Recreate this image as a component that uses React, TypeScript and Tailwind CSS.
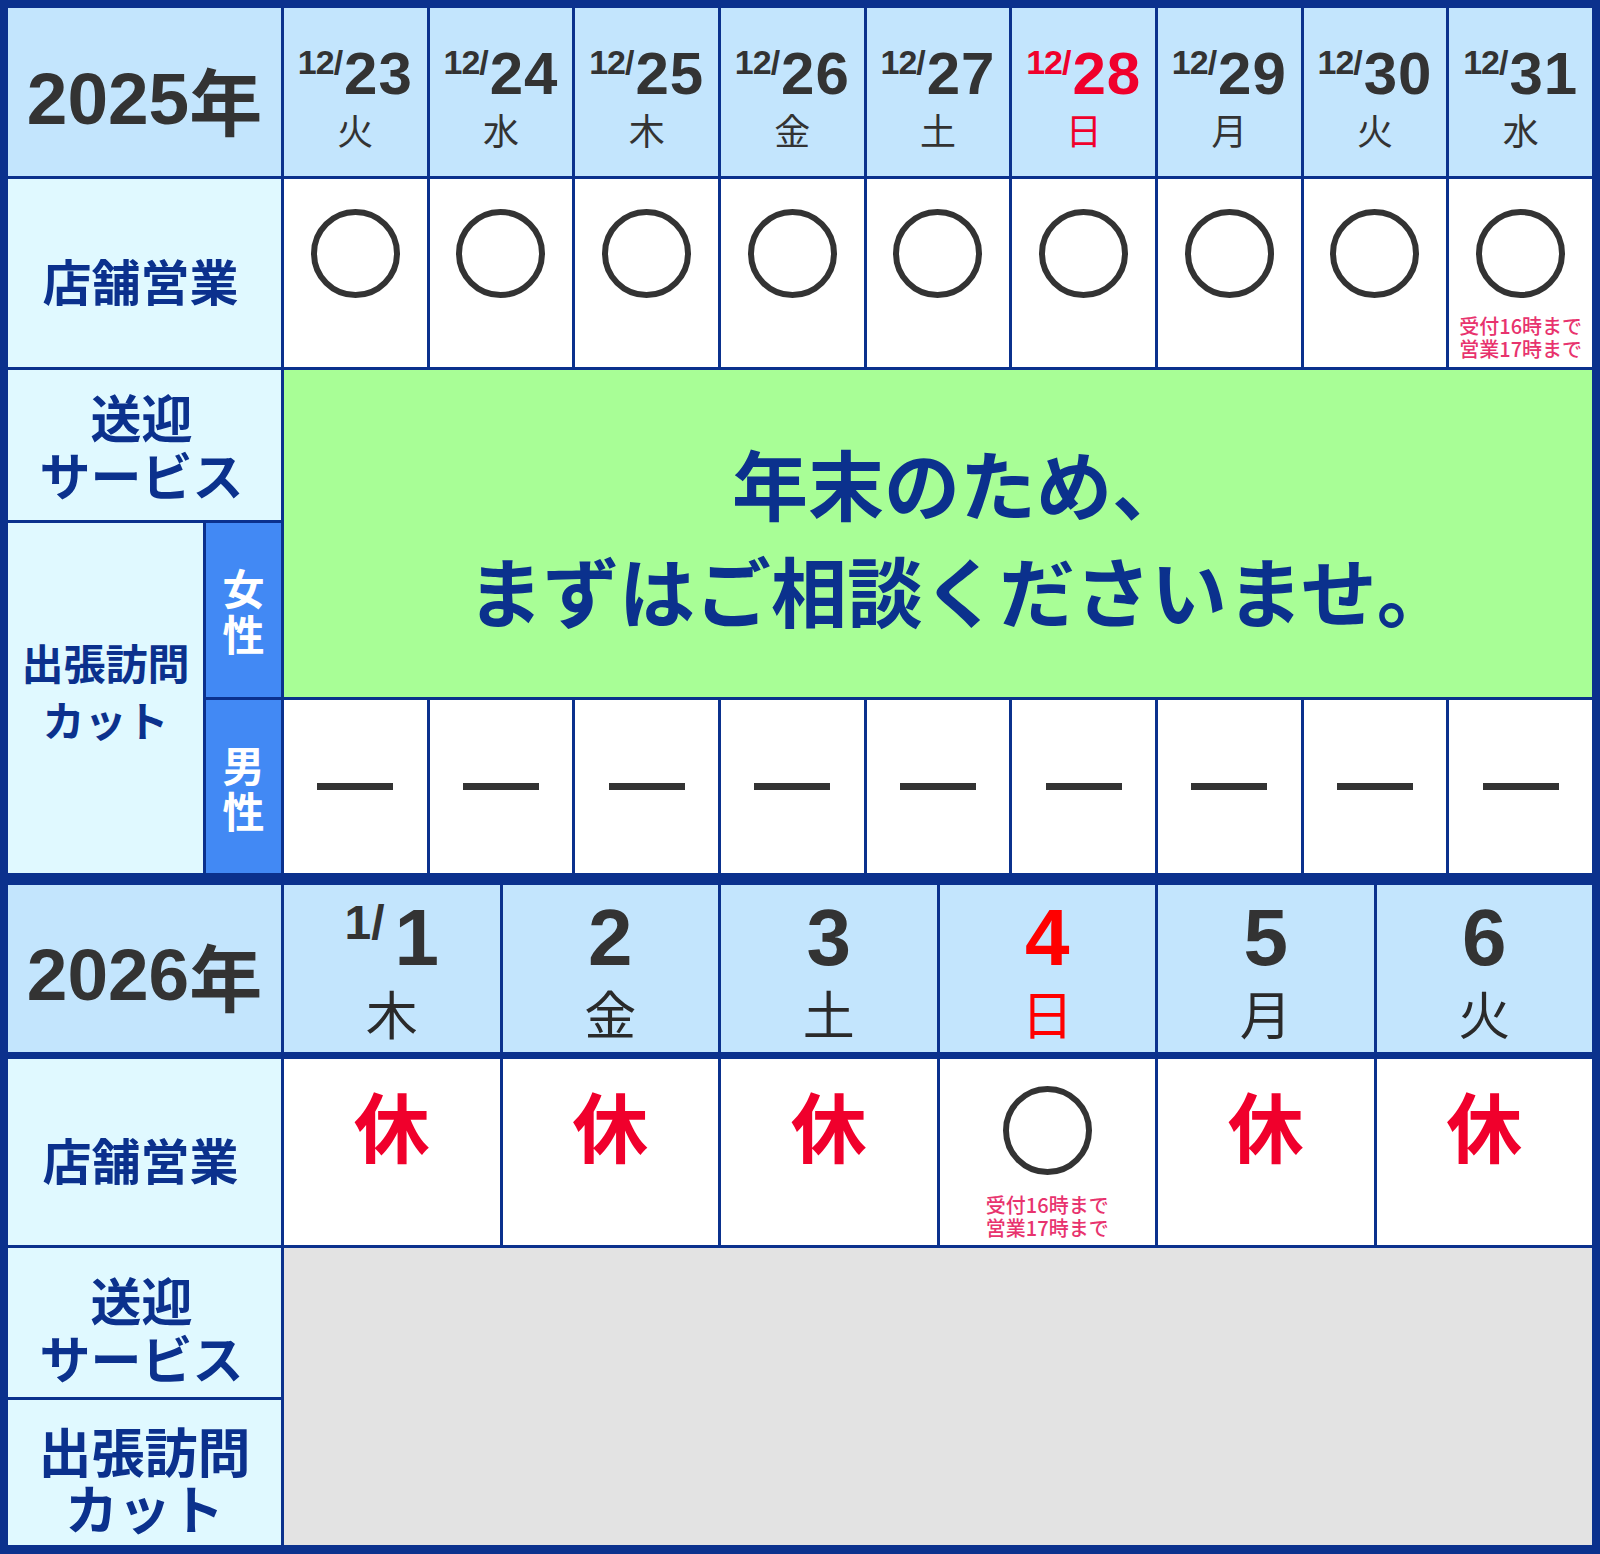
import React from "react";

type Day2025 = { md: string; wd: string; red?: boolean; note?: boolean };
type Day2026 = { pre?: string; d: string; wd: string; red?: boolean; open?: boolean };

const days2025: Day2025[] = [
  { md: "23", wd: "火" },
  { md: "24", wd: "水" },
  { md: "25", wd: "木" },
  { md: "26", wd: "金" },
  { md: "27", wd: "土" },
  { md: "28", wd: "日", red: true },
  { md: "29", wd: "月" },
  { md: "30", wd: "火" },
  { md: "31", wd: "水", note: true },
];

const days2026: Day2026[] = [
  { pre: "1/", d: "1", wd: "木" },
  { d: "2", wd: "金" },
  { d: "3", wd: "土" },
  { d: "4", wd: "日", red: true, open: true },
  { d: "5", wd: "月" },
  { d: "6", wd: "火" },
];

const Circle = () => (
  <div className="w-[89px] h-[89px] rounded-full border-[6px] border-[#333333] shrink-0" />
);

const Note = ({ className }: { className: string }) => (
  <div
    className={
      "text-[20px] leading-[23px] font-medium text-[#e8336e] text-center whitespace-nowrap " +
      className
    }
  >
    受付16時まで
    <br />
    営業17時まで
  </div>
);

const App = () => {
  return (
    <div className="w-[1600px] h-[1554px] bg-[#0b318d] pt-[8px] px-[8px] pb-[9px] flex flex-col gap-[12px] font-[family-name:Noto_Sans_CJK_JP,sans-serif]">
      {/* 2025 */}
      <div className="grid grid-cols-[195px_75px_repeat(9,minmax(0,1fr))] grid-rows-[168px_188px_150px_174px_173px] gap-[3px]">
        <div className="col-span-2 bg-[#c3e5fd] flex items-center justify-center pt-[12px] text-[#333333] font-bold text-[73px] leading-none">
          <span className="font-[family-name:Liberation_Sans,Noto_Sans_CJK_JP,sans-serif]">2025</span>
          <span>年</span>
        </div>
        {days2025.map((d) => (
          <div key={d.md} className="bg-[#c3e5fd] flex flex-col items-center pt-[36px]">
            <div
              className={
                "flex items-start h-[59px] font-bold leading-none font-[family-name:Liberation_Sans,sans-serif] " +
                (d.red ? "text-[#f0002c]" : "text-[#333333]")
              }
            >
              <span className="text-[34px] mt-[1px] tracking-[-1px] mr-[2px]">12/</span>
              <span className="text-[60px] tracking-[1px]">{d.md}</span>
            </div>
            <div
              className={
                "mt-[8px] text-[36px] leading-none " +
                (d.red ? "text-[#f0002c]" : "text-[#333333]")
              }
            >
              {d.wd}
            </div>
          </div>
        ))}

        <div className="col-span-2 bg-[#e0f9ff] text-[#0b318d] font-bold text-[49px] leading-none flex items-center justify-center pt-[12px] pr-[8px]">
          店舗営業
        </div>
        {days2025.map((d) => (
          <div key={"c" + d.md} className="bg-white flex flex-col items-center pt-[30px]">
            <Circle />
            {d.note && <Note className="mt-[16px]" />}
          </div>
        ))}

        <div className="col-span-2 bg-[#e0f9ff] text-[#0b318d] font-bold text-[51px] leading-[58px] flex items-center justify-center text-center pr-[6px]">
          送迎
          <br />
          サービス
        </div>
        <div className="col-start-3 col-span-9 row-start-3 row-span-2 bg-[#a8fe96] flex items-center justify-center text-center text-[#0b318d] font-bold text-[76px] leading-[107px]">
          <div className="pl-[44px] pt-[4px]">
            年末のため、
            <br />
            まずはご相談くださいませ。
          </div>
        </div>

        <div className="col-start-1 row-start-4 row-span-2 bg-[#e0f9ff] text-[#0b318d] font-bold text-[42px] leading-[57px] flex items-center justify-center text-center pb-[16px]">
          出張訪問
          <br />
          カット
        </div>
        <div className="col-start-2 row-start-4 bg-[#4289f4] text-white font-bold text-[42px] leading-[46px] flex items-center justify-center text-center">
          女<br />性
        </div>
        <div className="col-start-2 row-start-5 bg-[#4289f4] text-white font-bold text-[42px] leading-[46px] flex items-center justify-center text-center">
          男<br />性
        </div>
        {days2025.map((d) => (
          <div key={"m" + d.md} className="row-start-5 bg-white flex items-center justify-center">
            <div className="w-[76px] h-[7px] bg-[#333333]" />
          </div>
        ))}
      </div>

      {/* 2026 */}
      <div className="grid grid-cols-[273px_repeat(6,minmax(0,1fr))] grid-rows-[171px_186px_149px_145px] gap-[3px]">
        <div className="bg-[#c3e5fd] border-b-[4px] border-[#0b318d] flex items-center justify-center pt-[12px] text-[#333333] font-bold text-[73px] leading-none">
          <span className="font-[family-name:Liberation_Sans,Noto_Sans_CJK_JP,sans-serif]">2026</span>
          <span>年</span>
        </div>
        {days2026.map((d) => (
          <div
            key={d.d}
            className="bg-[#c3e5fd] border-b-[4px] border-[#0b318d] flex flex-col items-center pt-[13px]"
          >
            <div
              className={
                "flex items-start h-[80px] font-bold leading-none font-[family-name:Liberation_Sans,sans-serif] " +
                (d.red ? "text-[#ff0000]" : "text-[#333333]")
              }
            >
              {d.pre && <span className="text-[48px] mt-[1px] mr-[10px]">{d.pre}</span>}
              <span className="text-[80px]">{d.d}</span>
            </div>
            <div
              className={
                "mt-[9px] text-[52px] leading-none " +
                (d.red ? "text-[#ff0000]" : "text-[#2a2a2a]")
              }
            >
              {d.wd}
            </div>
          </div>
        ))}

        <div className="bg-[#e0f9ff] text-[#0b318d] font-bold text-[49px] leading-none flex items-center justify-center pt-[12px] pr-[8px]">
          店舗営業
        </div>
        {days2026.map((d) =>
          d.open ? (
            <div key={"s" + d.d} className="bg-white flex flex-col items-center pt-[27px]">
              <Circle />
              <Note className="mt-[18px]" />
            </div>
          ) : (
            <div
              key={"s" + d.d}
              className="bg-white flex justify-center pt-[27px] text-[#f0002c] font-bold text-[76px] leading-none"
            >
              休
            </div>
          )
        )}

        <div className="bg-[#e0f9ff] text-[#0b318d] font-bold text-[51px] leading-[58px] flex items-center justify-center text-center pt-[10px] pr-[6px]">
          送迎
          <br />
          サービス
        </div>
        <div className="col-start-2 col-span-6 row-start-3 row-span-2 bg-[#e3e3e3]" />
        <div className="col-start-1 row-start-4 bg-[#e0f9ff] text-[#0b318d] font-bold text-[53px] leading-[57px] flex items-center justify-center text-center pt-[12px]">
          出張訪問
          <br />
          カット
        </div>
      </div>
    </div>
  );
};

export default App;
